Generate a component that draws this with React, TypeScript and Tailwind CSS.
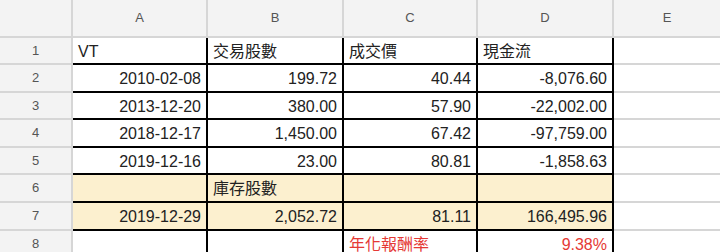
const cols = ['A', 'B', 'C', 'D', 'E'];
const colClass = ['w-[73px]', 'w-[135px]', 'w-[136px]', 'w-[134px]', 'w-[136px]', 'flex-1'];
const rowClass = ['h-[27px]', 'h-[28px]', 'h-[27px]', 'h-[28px]', 'h-[27px]', 'h-[28px]', 'h-[28px]', 'h-[28px]'];

type Cell = { text?: string; align?: 'left' | 'right'; red?: boolean };

const rows: { fill?: boolean; cells: Cell[] }[] = [
  { cells: [{ text: 'VT' }, { text: '交易股數' }, { text: '成交價' }, { text: '現金流' }] },
  { cells: [{ text: '2010-02-08', align: 'right' }, { text: '199.72', align: 'right' }, { text: '40.44', align: 'right' }, { text: '-8,076.60', align: 'right' }] },
  { cells: [{ text: '2013-12-20', align: 'right' }, { text: '380.00', align: 'right' }, { text: '57.90', align: 'right' }, { text: '-22,002.00', align: 'right' }] },
  { cells: [{ text: '2018-12-17', align: 'right' }, { text: '1,450.00', align: 'right' }, { text: '67.42', align: 'right' }, { text: '-97,759.00', align: 'right' }] },
  { cells: [{ text: '2019-12-16', align: 'right' }, { text: '23.00', align: 'right' }, { text: '80.81', align: 'right' }, { text: '-1,858.63', align: 'right' }] },
  { fill: true, cells: [{}, { text: '庫存股數' }, {}, {}] },
  { fill: true, cells: [{ text: '2019-12-29', align: 'right' }, { text: '2,052.72', align: 'right' }, { text: '81.11', align: 'right' }, { text: '166,495.96', align: 'right' }] },
  { cells: [{}, {}, { text: '年化報酬率', red: true }, { text: '9.38%', align: 'right', red: true }] },
];

export default function App() {
  return (
    <div
      className="w-[720px] h-[252px] overflow-hidden bg-white"
      style={{ fontFamily: '"Liberation Sans", Arial, "Noto Sans CJK TC", sans-serif' }}
    >
      {/* column headers */}
      <div className="flex h-[38px] bg-[#f3f3f3] text-[13px] text-[#555]">
        <div className={`${colClass[0]} border-r-2 border-b-2 border-[#d6d6d6]`} />
        {cols.map((c, i) => (
          <div
            key={c}
            className={`${colClass[i + 1]} flex items-center justify-center border-b-2 border-[#d6d6d6] ${i < 4 ? 'border-r-2' : ''}`}
          >
            {c}
          </div>
        ))}
      </div>

      {rows.map((row, r) => (
        <div key={r} className={`flex ${rowClass[r]}`}>
          <div
            className={`${colClass[0]} flex items-center justify-center bg-[#f3f3f3] border-r-2 border-b-2 border-[#d6d6d6] text-[13px] text-[#555]`}
          >
            {r + 1}
          </div>
          {row.cells.map((cell, i) => (
            <div
              key={i}
              className={`${colClass[i + 1]} flex items-center pt-[2px] px-[5px] border-r-2 border-b-2 border-black text-[16px] whitespace-nowrap ${
                cell.align === 'right' ? 'justify-end' : 'justify-start'
              } ${row.fill ? 'bg-[#fcf0cf]' : 'bg-white'} ${cell.red ? 'text-[#e53935]' : 'text-[#222]'}`}
            >
              {cell.text}
            </div>
          ))}
          <div className={`${colClass[5]} border-b-2 border-[#d6d6d6]`} />
        </div>
      ))}
    </div>
  );
}
